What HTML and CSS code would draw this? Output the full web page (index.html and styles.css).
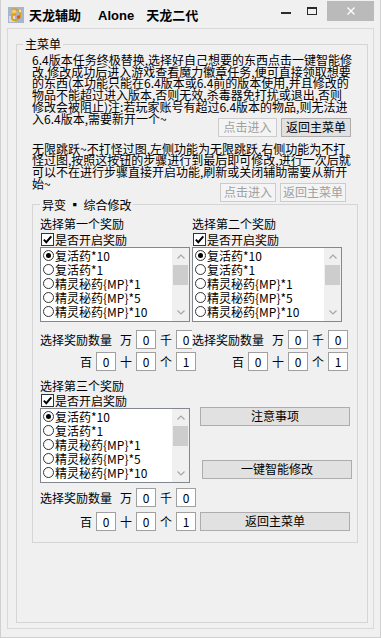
FILE: index.html
```html
<!DOCTYPE html>
<html lang="zh-CN">
<head>
<meta charset="utf-8">
<title>天龙辅助</title>
<link rel="stylesheet" href="styles.css">
</head>
<body>
<div class="window">
  <div class="titlebar">
    <svg class="appicon" width="16" height="16" viewBox="0 0 16 16">
      <rect width="16" height="16" fill="#a8b6c9"/>
      <rect x="1" y="9" width="6" height="6" fill="#d5dde8"/>
      <path d="M4 3c3-2 7 0 8 3s-1 6-4 7-5-1-4-4 3-2 4-1" fill="none" stroke="#e39a1f" stroke-width="2"/>
      <circle cx="6" cy="4.5" r="2" fill="#f6d257"/>
      <circle cx="10.5" cy="10" r="1.8" fill="#c9621a"/>
      <circle cx="12" cy="4" r="1.2" fill="#fbe6a0"/>
    </svg>
    <div class="title"><span>天龙辅助</span><span class="t-alone">Alone</span><span class="t-sub">天龙二代</span></div>
    <div class="controls">
      <span class="ctl-min"></span>
      <span class="ctl-max"></span>
      <span class="ctl-close">
        <svg width="8" height="8" viewBox="0 0 8 8"><path d="M0.5 0.5L7.5 7.5M7.5 0.5L0.5 7.5" stroke="#fff" stroke-width="1.3"/></svg>
      </span>
    </div>
  </div>

  <div class="frame">
    <fieldset class="group group-main">
      <legend>主菜单</legend>
      <div class="main-body">
        <div class="para">
          <div>6.4版本任务终极替换,选择好自己想要的东西点击一键智能修</div>
          <div>改,修改成功后进入游戏查看魔力徽章任务,便可直接领取想要</div>
          <div>的东西(本功能只能在6.4版本或6.4前的版本使用,并且修改的</div>
          <div>物品不能超过进入版本,否则无效,杀毒器免打扰或退出,否则</div>
          <div>修改会被阻止)注:若玩家账号有超过6.4版本的物品,则无法进</div>
          <div class="lastline">
            <span>入6.4版本,需要新开一个~</span>
            <div class="btns btns-1">
              <button class="btn btn-a1" disabled>点击进入</button>
              <button class="btn btn-b1">返回主菜单</button>
            </div>
          </div>
        </div>

        <div class="para para-2">
          <div>无限跳跃~不打怪过图,左侧功能为无限跳跃,右侧功能为不打</div>
          <div>怪过图,按照这按钮的步骤进行到最后即可修改,进行一次后就</div>
          <div>可以不在进行步骤直接开启功能,刷新或关闭辅助需要从新开</div>
          <div class="lastline">
            <span>始~</span>
            <div class="btns btns-2">
              <button class="btn btn-a2" disabled>点击进入</button>
              <button class="btn btn-b2" disabled>返回主菜单</button>
            </div>
          </div>
        </div>

        <fieldset class="group group-inner">
          <legend>异变 ▪ 综合修改</legend>
          <div class="inner-body">
            <div class="sec sec-1">
              <div class="col">
                <div class="rlabel">选择第一个奖励</div>
                <div class="chk-row"><span class="chk"><svg width="11" height="11" viewBox="0 0 11 11"><path d="M1.8 5.6L4.3 8.2L9.3 2.4" fill="none" stroke="#000" stroke-width="2"/></svg></span><span>是否开启奖励</span></div>
                <div class="listbox">
                  <div class="items">
                    <div class="item"><span class="radio on"></span>复活药*10</div>
                    <div class="item"><span class="radio"></span>复活药*1</div>
                    <div class="item"><span class="radio"></span>精灵秘药{MP}*1</div>
                    <div class="item"><span class="radio"></span>精灵秘药{MP}*5</div>
                    <div class="item"><span class="radio"></span>精灵秘药{MP}*10</div>
                  </div>
                  <div class="sb">
                    <div class="sb-arrow"><svg width="8" height="5" viewBox="0 0 8 5"><path d="M0.5 4.5L4 1L7.5 4.5" fill="none" stroke="#a6a6a6" stroke-width="1.2"/></svg></div>
                    <div class="sb-thumb"></div>
                    <div class="sb-space"></div>
                    <div class="sb-arrow"><svg width="8" height="5" viewBox="0 0 8 5"><path d="M0.5 0.5L4 4L7.5 0.5" fill="none" stroke="#a6a6a6" stroke-width="1.2"/></svg></div>
                  </div>
                </div>
                <div class="qty">
                  <div class="qty-row"><span class="qlabel">选择奖励数量</span><span class="qu">万</span><span class="qbox">0</span><span class="qu">千</span><span class="qbox">0</span></div>
                  <div class="qty-row"><span class="qspacer"></span><span class="qu">百</span><span class="qbox">0</span><span class="qu">十</span><span class="qbox">0</span><span class="qu">个</span><span class="qbox">1</span></div>
                </div>
              </div>
              <div class="col">
                <div class="rlabel">选择第二个奖励</div>
                <div class="chk-row"><span class="chk"><svg width="11" height="11" viewBox="0 0 11 11"><path d="M1.8 5.6L4.3 8.2L9.3 2.4" fill="none" stroke="#000" stroke-width="2"/></svg></span><span>是否开启奖励</span></div>
                <div class="listbox">
                  <div class="items">
                    <div class="item"><span class="radio on"></span>复活药*10</div>
                    <div class="item"><span class="radio"></span>复活药*1</div>
                    <div class="item"><span class="radio"></span>精灵秘药{MP}*1</div>
                    <div class="item"><span class="radio"></span>精灵秘药{MP}*5</div>
                    <div class="item"><span class="radio"></span>精灵秘药{MP}*10</div>
                  </div>
                  <div class="sb">
                    <div class="sb-arrow"><svg width="8" height="5" viewBox="0 0 8 5"><path d="M0.5 4.5L4 1L7.5 4.5" fill="none" stroke="#a6a6a6" stroke-width="1.2"/></svg></div>
                    <div class="sb-thumb"></div>
                    <div class="sb-space"></div>
                    <div class="sb-arrow"><svg width="8" height="5" viewBox="0 0 8 5"><path d="M0.5 0.5L4 4L7.5 0.5" fill="none" stroke="#a6a6a6" stroke-width="1.2"/></svg></div>
                  </div>
                </div>
                <div class="qty">
                  <div class="qty-row"><span class="qlabel">选择奖励数量</span><span class="qu">万</span><span class="qbox">0</span><span class="qu">千</span><span class="qbox">0</span></div>
                  <div class="qty-row"><span class="qspacer"></span><span class="qu">百</span><span class="qbox">0</span><span class="qu">十</span><span class="qbox">0</span><span class="qu">个</span><span class="qbox">1</span></div>
                </div>
              </div>
            </div>

            <div class="sec sec-3">
              <div class="col">
                <div class="rlabel">选择第三个奖励</div>
                <div class="chk-row"><span class="chk"><svg width="11" height="11" viewBox="0 0 11 11"><path d="M1.8 5.6L4.3 8.2L9.3 2.4" fill="none" stroke="#000" stroke-width="2"/></svg></span><span>是否开启奖励</span></div>
                <div class="listbox">
                  <div class="items">
                    <div class="item"><span class="radio on"></span>复活药*10</div>
                    <div class="item"><span class="radio"></span>复活药*1</div>
                    <div class="item"><span class="radio"></span>精灵秘药{MP}*1</div>
                    <div class="item"><span class="radio"></span>精灵秘药{MP}*5</div>
                    <div class="item"><span class="radio"></span>精灵秘药{MP}*10</div>
                  </div>
                  <div class="sb">
                    <div class="sb-arrow"><svg width="8" height="5" viewBox="0 0 8 5"><path d="M0.5 4.5L4 1L7.5 4.5" fill="none" stroke="#a6a6a6" stroke-width="1.2"/></svg></div>
                    <div class="sb-thumb"></div>
                    <div class="sb-space"></div>
                    <div class="sb-arrow"><svg width="8" height="5" viewBox="0 0 8 5"><path d="M0.5 0.5L4 4L7.5 0.5" fill="none" stroke="#a6a6a6" stroke-width="1.2"/></svg></div>
                  </div>
                </div>
              </div>
              <div class="side">
                <button class="btn btn-wide btn-notice">注意事项</button>
                <button class="btn btn-wide btn-smart">一键智能修改</button>
              </div>
              <div class="qty">
                <div class="qty-row"><span class="qlabel">选择奖励数量</span><span class="qu">万</span><span class="qbox">0</span><span class="qu">千</span><span class="qbox">0</span></div>
                <div class="qty-row"><span class="qspacer"></span><span class="qu">百</span><span class="qbox">0</span><span class="qu">十</span><span class="qbox">0</span><span class="qu">个</span><span class="qbox">1</span></div>
              </div>
              <button class="btn btn-wide btn-back">返回主菜单</button>
            </div>
          </div>
        </fieldset>
      </div>
    </fieldset>
  </div>
</div>
</body>
</html>
```

FILE: styles.css
```css
* { box-sizing: border-box; }
html, body { margin: 0; padding: 0; }
body {
  background: #f0f0f0;
  font-family: "Noto Sans CJK SC", "Noto Sans", sans-serif;
  font-size: 12px;
  color: #000;
}
.window {
  width: 381px;
  height: 638px;
  background: #f0f0f0;
  border: 1px solid #d0d0d0;
  border-top: 0;
  display: flex;
  flex-direction: column;
}

/* title bar */
.titlebar {
  height: 28px;
  flex: none;
  display: flex;
  align-items: flex-start;
  padding-left: 7px;
}
.appicon { margin-top: 7px; flex: none; }
.title {
  margin-left: 5px;
  margin-top: 7px;
  line-height: 16px;
  font-size: 13px;
  font-weight: 700;
  white-space: nowrap;
}
.t-alone { font-family: "Liberation Sans", Arial, sans-serif; margin-left: 17px; }
.t-sub { margin-left: 12px; }
.controls {
  margin-left: auto;
  margin-right: 6px;
  display: flex;
  align-items: flex-start;
}
.ctl-min { width: 10px; height: 2px; background: #2a2a2a; margin-top: 12px; }
.ctl-max {
  width: 10px; height: 8px;
  border: 1px solid #2a2a2a; border-top-width: 2px;
  margin-left: 16px; margin-top: 7px;
}
.ctl-close {
  width: 47px; height: 20px;
  margin-left: 10px; margin-top: 1px;
  background: #bababa;
  display: flex; align-items: center; justify-content: center;
}

/* frames */
.frame {
  height: 601px;
  margin: 0 6px;
  border: 1px solid #d9d9d9;
  display: flex;
  flex-direction: column;
}
.group {
  border: 1px solid #d5d5d5;
  margin: 0;
  padding: 0;
  min-width: 0;
}
.group > legend { padding: 0 2px; font-size: 12px; white-space: nowrap; }
.group-main { margin: 8px 5px 5px 8px; flex: 1; }
.group-main > legend { margin-left: 6px; line-height: 14px; }
.main-body { padding: 3px 0 0 15px; }

.para { line-height: 11.7px; white-space: nowrap; }
.para-2 { margin-top: 6px; }
.lastline { display: flex; align-items: flex-start; }
.btns { display: flex; margin-left: auto; margin-top: 5px; }
.btns-1 { margin-right: 16px; }
.btns-2 { margin-right: 21px; }

.btn {
  height: 19px;
  padding: 0;
  border: 1px solid #adadad;
  background: #e1e1e1;
  font-family: inherit;
  font-size: 12px;
  line-height: 16px;
  color: #000;
}
.btn:disabled { border-color: #cccccc; background: #f4f4f4; color: #a0a0a0; }
.btn-a1 { width: 59px; }
.btn-b1 { width: 70px; margin-left: 4px; }
.btn-a2 { width: 56px; }
.btn-b2 { width: 66px; margin-left: 4px; }

.group-inner { width: 326px; }
.group-inner > legend { margin-left: 7px; line-height: 6px; }
.inner-body { padding: 9px 0 11px 7px; }

.sec { display: grid; grid-template-columns: 150px 150px; column-gap: 2px; }
.sec-3 { column-gap: 10px; margin-top: 8px; }

.rlabel { line-height: 14px; height: 14px; white-space: nowrap; }
.chk-row { display: flex; align-items: center; height: 13px; margin-top: 2px; line-height: 13px; white-space: nowrap; }
.sec-3 .chk-row { margin-top: 1px; }
.chk {
  width: 13px; height: 13px;
  border: 1px solid #333;
  background: #fff;
  margin: 0 1px;
  display: flex; align-items: center; justify-content: center;
  flex: none;
}

.listbox {
  height: 75px;
  margin-top: 1px;
  border: 1px solid #828790;
  background: #fff;
  display: flex;
}
.items { flex: 1; padding-top: 1px; min-width: 0; }
.item { height: 14px; line-height: 14px; display: flex; align-items: center; white-space: nowrap; }
.radio {
  width: 11px; height: 11px;
  border: 1px solid #333;
  border-radius: 50%;
  background: #fff;
  margin: 0 1px 0 2px;
  flex: none;
  display: flex; align-items: center; justify-content: center;
}
.radio.on::after {
  content: "";
  width: 5px; height: 5px;
  border-radius: 50%;
  background: #000;
}
.sb { width: 17px; flex: none; background: #f0f0f0; display: flex; flex-direction: column; }
.sb-arrow { height: 17px; flex: none; display: flex; align-items: center; justify-content: center; }
.sb-thumb { height: 20px; flex: none; margin: 0 1px; background: #cdcdcd; }
.sb-space { flex: 1; }

.qty { margin-top: 8px; }
.sec-3 .qty { margin-top: 5px; }
.qty-row { display: flex; height: 19px; line-height: 19px; white-space: nowrap; }
.qty-row + .qty-row { margin-top: 3px; }
.sec-3 .qty-row + .qty-row { margin-top: 5px; }
.qlabel { width: 80px; flex: none; background: #f0f0f0; }
.qspacer { width: 40px; flex: none; }
.qu { width: 12px; flex: none; }
.qbox {
  width: 20px; height: 19px; flex: none;
  margin: 0 4px;
  border: 1px solid #a0a0a0;
  background: #fff;
  text-align: center;
  line-height: 17px;
}

.side { display: flex; flex-direction: column; align-items: flex-start; }
.btn-wide { width: 150px; }
.btn-notice { margin-top: 28px; }
.btn-smart { margin-top: 34px; margin-left: 2px; }
.btn-back { align-self: end; }
```
